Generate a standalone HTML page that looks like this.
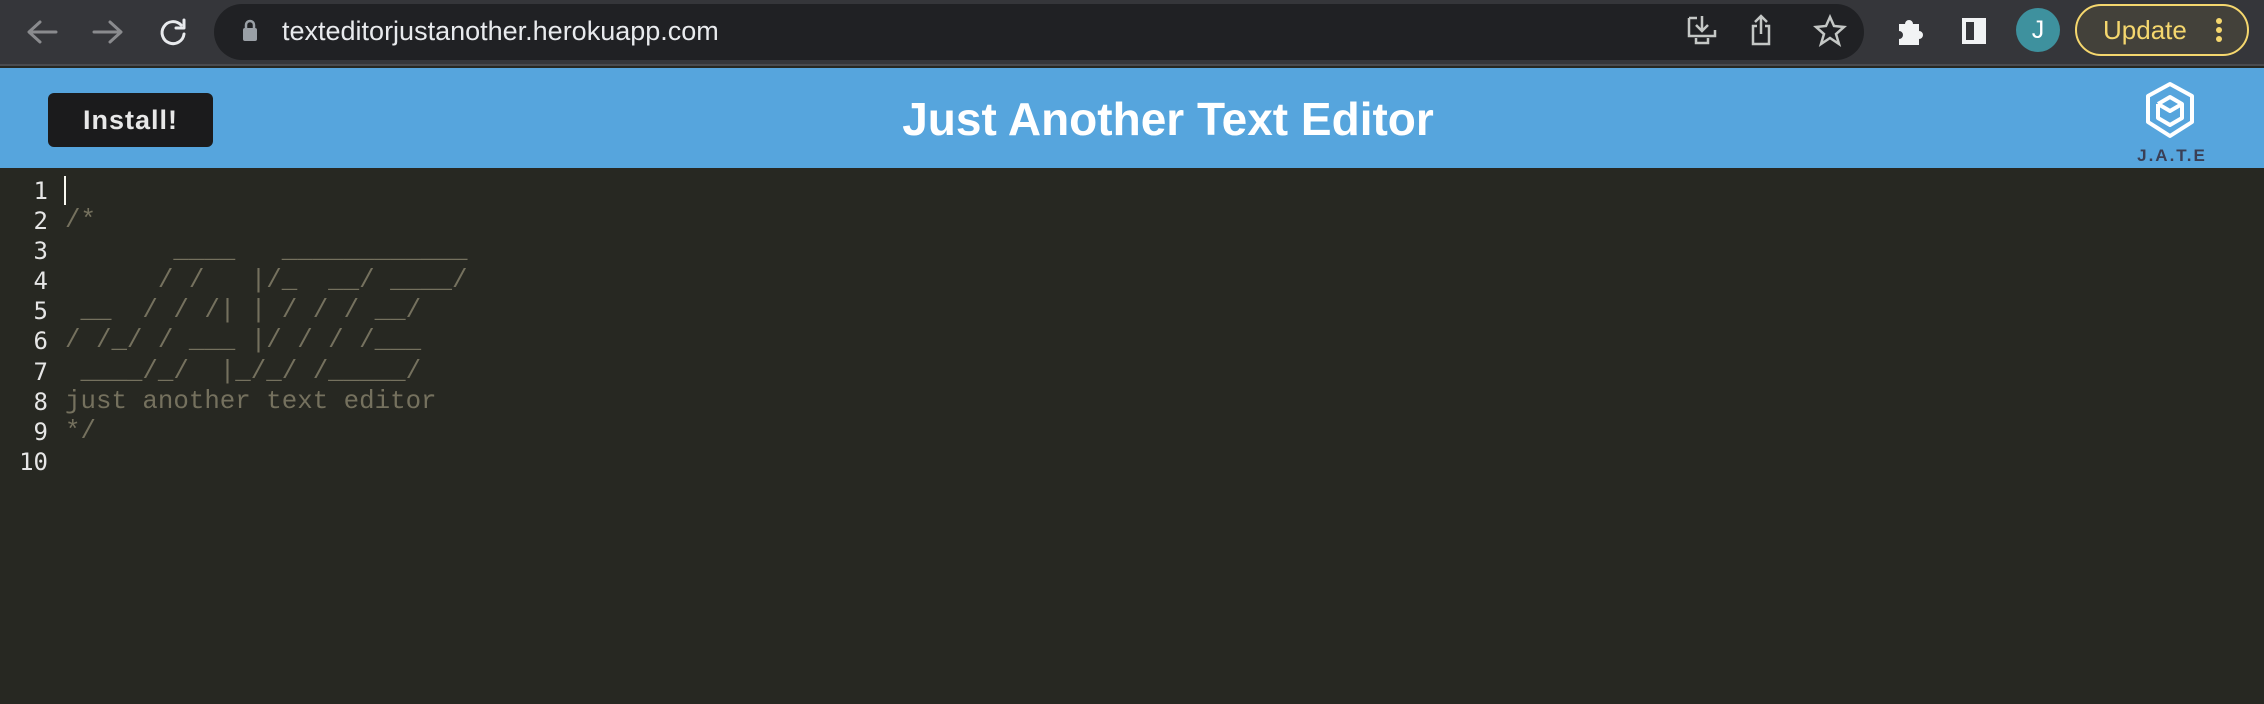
<!DOCTYPE html>
<html><head><meta charset="utf-8"><style>
*{margin:0;padding:0;box-sizing:border-box}
body{width:2264px;height:704px;overflow:hidden;background:#272822;font-family:"Liberation Sans",sans-serif;position:relative}
.chrome{position:absolute;left:0;top:0;width:2264px;height:66px;background:#35363a;border-bottom:2px solid #4a4b4f}
.url{position:absolute;left:214px;top:4px;width:1650px;height:56px;border-radius:28px;background:#202124}
.urltext{position:absolute;left:282px;top:16px;color:#e8eaed;font-size:27px}
.hdr{position:absolute;left:0;top:68px;width:2264px;height:100px;background:#56a5dd}
.btn{position:absolute;left:48px;top:93px;width:165px;height:54px;background:#1b1b1c;border-radius:6px;color:#e8e8e8;font-size:27px;font-weight:bold;text-align:center;line-height:54px;letter-spacing:1px}
.title{position:absolute;left:0;width:2336px;top:92px;text-align:center;color:#fff;font-size:46px;font-weight:bold}
.ed{position:absolute;left:0;top:176px;font-family:"Liberation Mono",monospace;font-size:25.8px;line-height:30.1px}
.ln{position:absolute;left:0;width:48px;text-align:right;color:#e6e6e6;font-family:"DejaVu Sans Mono",monospace;font-size:24px}
.code{position:absolute;left:65px;color:#75715e;white-space:pre}
.upd{position:absolute;left:2075px;top:4px;width:174px;height:52px;border:2px solid #f5d76e;border-radius:26px;background:#43413a;color:#f5d76e;font-size:26px;line-height:48px;padding-left:26px}
.dot{position:absolute;left:139px;width:6px;height:6px;border-radius:50%;background:#f5d76e}
</style></head><body>
<div class="chrome">
<svg style="position:absolute;left:24px;top:16px" width="200" height="34" fill="none" stroke-width="3" stroke-linecap="round" stroke-linejoin="round">
<path d="M32 16H6M16 6L5 16l11 10" stroke="#8a8b8e"/>
<path d="M70 16h26M86 6l11 10-11 10" stroke="#8a8b8e"/>
<path d="M157 9a11 11 0 1 0 3 9" stroke="#e8eaed"/><path d="M160 4v8h-8" stroke="#e8eaed"/>
</svg>
<div class="url"></div>
<svg style="position:absolute;left:242px;top:18px" width="16" height="24"><rect x="1" y="10" width="14" height="13" rx="2" fill="#9aa0a6"/><path d="M4 10V7a4 4 0 0 1 8 0v3" stroke="#9aa0a6" stroke-width="2.5" fill="none"/></svg>
<div class="urltext">texteditorjustanother.herokuapp.com</div>
<svg style="position:absolute;left:1686px;top:14px" width="170" height="34" fill="none" stroke="#c4c7c5" stroke-width="2.5">
<path d="M3 4h8M3 4v18h26V16M16 2v14M10 11l6 6 6-6M10 24v5h12v-5"/>
<path d="M71 12h-4v18h16V12h-4M75 20V3M69 8l6-6 6 6"/>
<path d="M144 3l4 9 10 1-8 7 3 10-9-6-9 6 3-10-8-7 10-1z"/>
</svg>
<svg style="position:absolute;left:1894px;top:14px" width="110" height="34">
<path d="M5 10h6a4 4 0 0 1 8 0h6v7a4 4 0 0 1 0 8v6H5v-6a4 4 0 0 0 0-8z" fill="#f1f3f4"/>
<rect x="70" y="6" width="20" height="22" fill="none" stroke="#f1f3f4" stroke-width="4"/><rect x="80" y="6" width="10" height="22" fill="#f1f3f4"/>
</svg>
<div style="position:absolute;left:2016px;top:8px;width:44px;height:44px;border-radius:50%;background:#3e919e;color:#fff;font-size:25px;text-align:center;line-height:44px">J</div>
<div class="upd">Update<div class="dot" style="top:12px"></div><div class="dot" style="top:21px"></div><div class="dot" style="top:30px"></div></div>
</div>
<div class="hdr"></div>
<div class="btn">Install!</div>
<div class="title">Just Another Text Editor</div>
<svg style="position:absolute;left:2142px;top:80px" width="56" height="60" fill="none" stroke="#fff" stroke-width="4" stroke-linejoin="round">
<path d="M28 4L50 16v26L28 56 6 42V16z"/><path d="M16 24l12-7 12 7v14l-12 7-12-7V24"/><path d="M16 24l12 7 12-7"/>
</svg>
<div style="position:absolute;left:2130px;top:146px;width:84px;text-align:center;color:#3a3f55;font-size:17px;font-weight:bold;letter-spacing:2px">J.A.T.E</div>
<div class="ed">
<div class="ln">1<br>2<br>3<br>4<br>5<br>6<br>7<br>8<br>9<br>10</div>
<div class="code"><span style="border-left:2px solid #f8f8f0;margin-left:-1px"> </span>
/*
       ____   ____________
      / /   |/_  __/ ____/
 __  / / /| | / / / __/
/ /_/ / ___ |/ / / /___
 ____/_/  |_/_/ /_____/
just another text editor
*/
</div>
</div>
</body></html>
